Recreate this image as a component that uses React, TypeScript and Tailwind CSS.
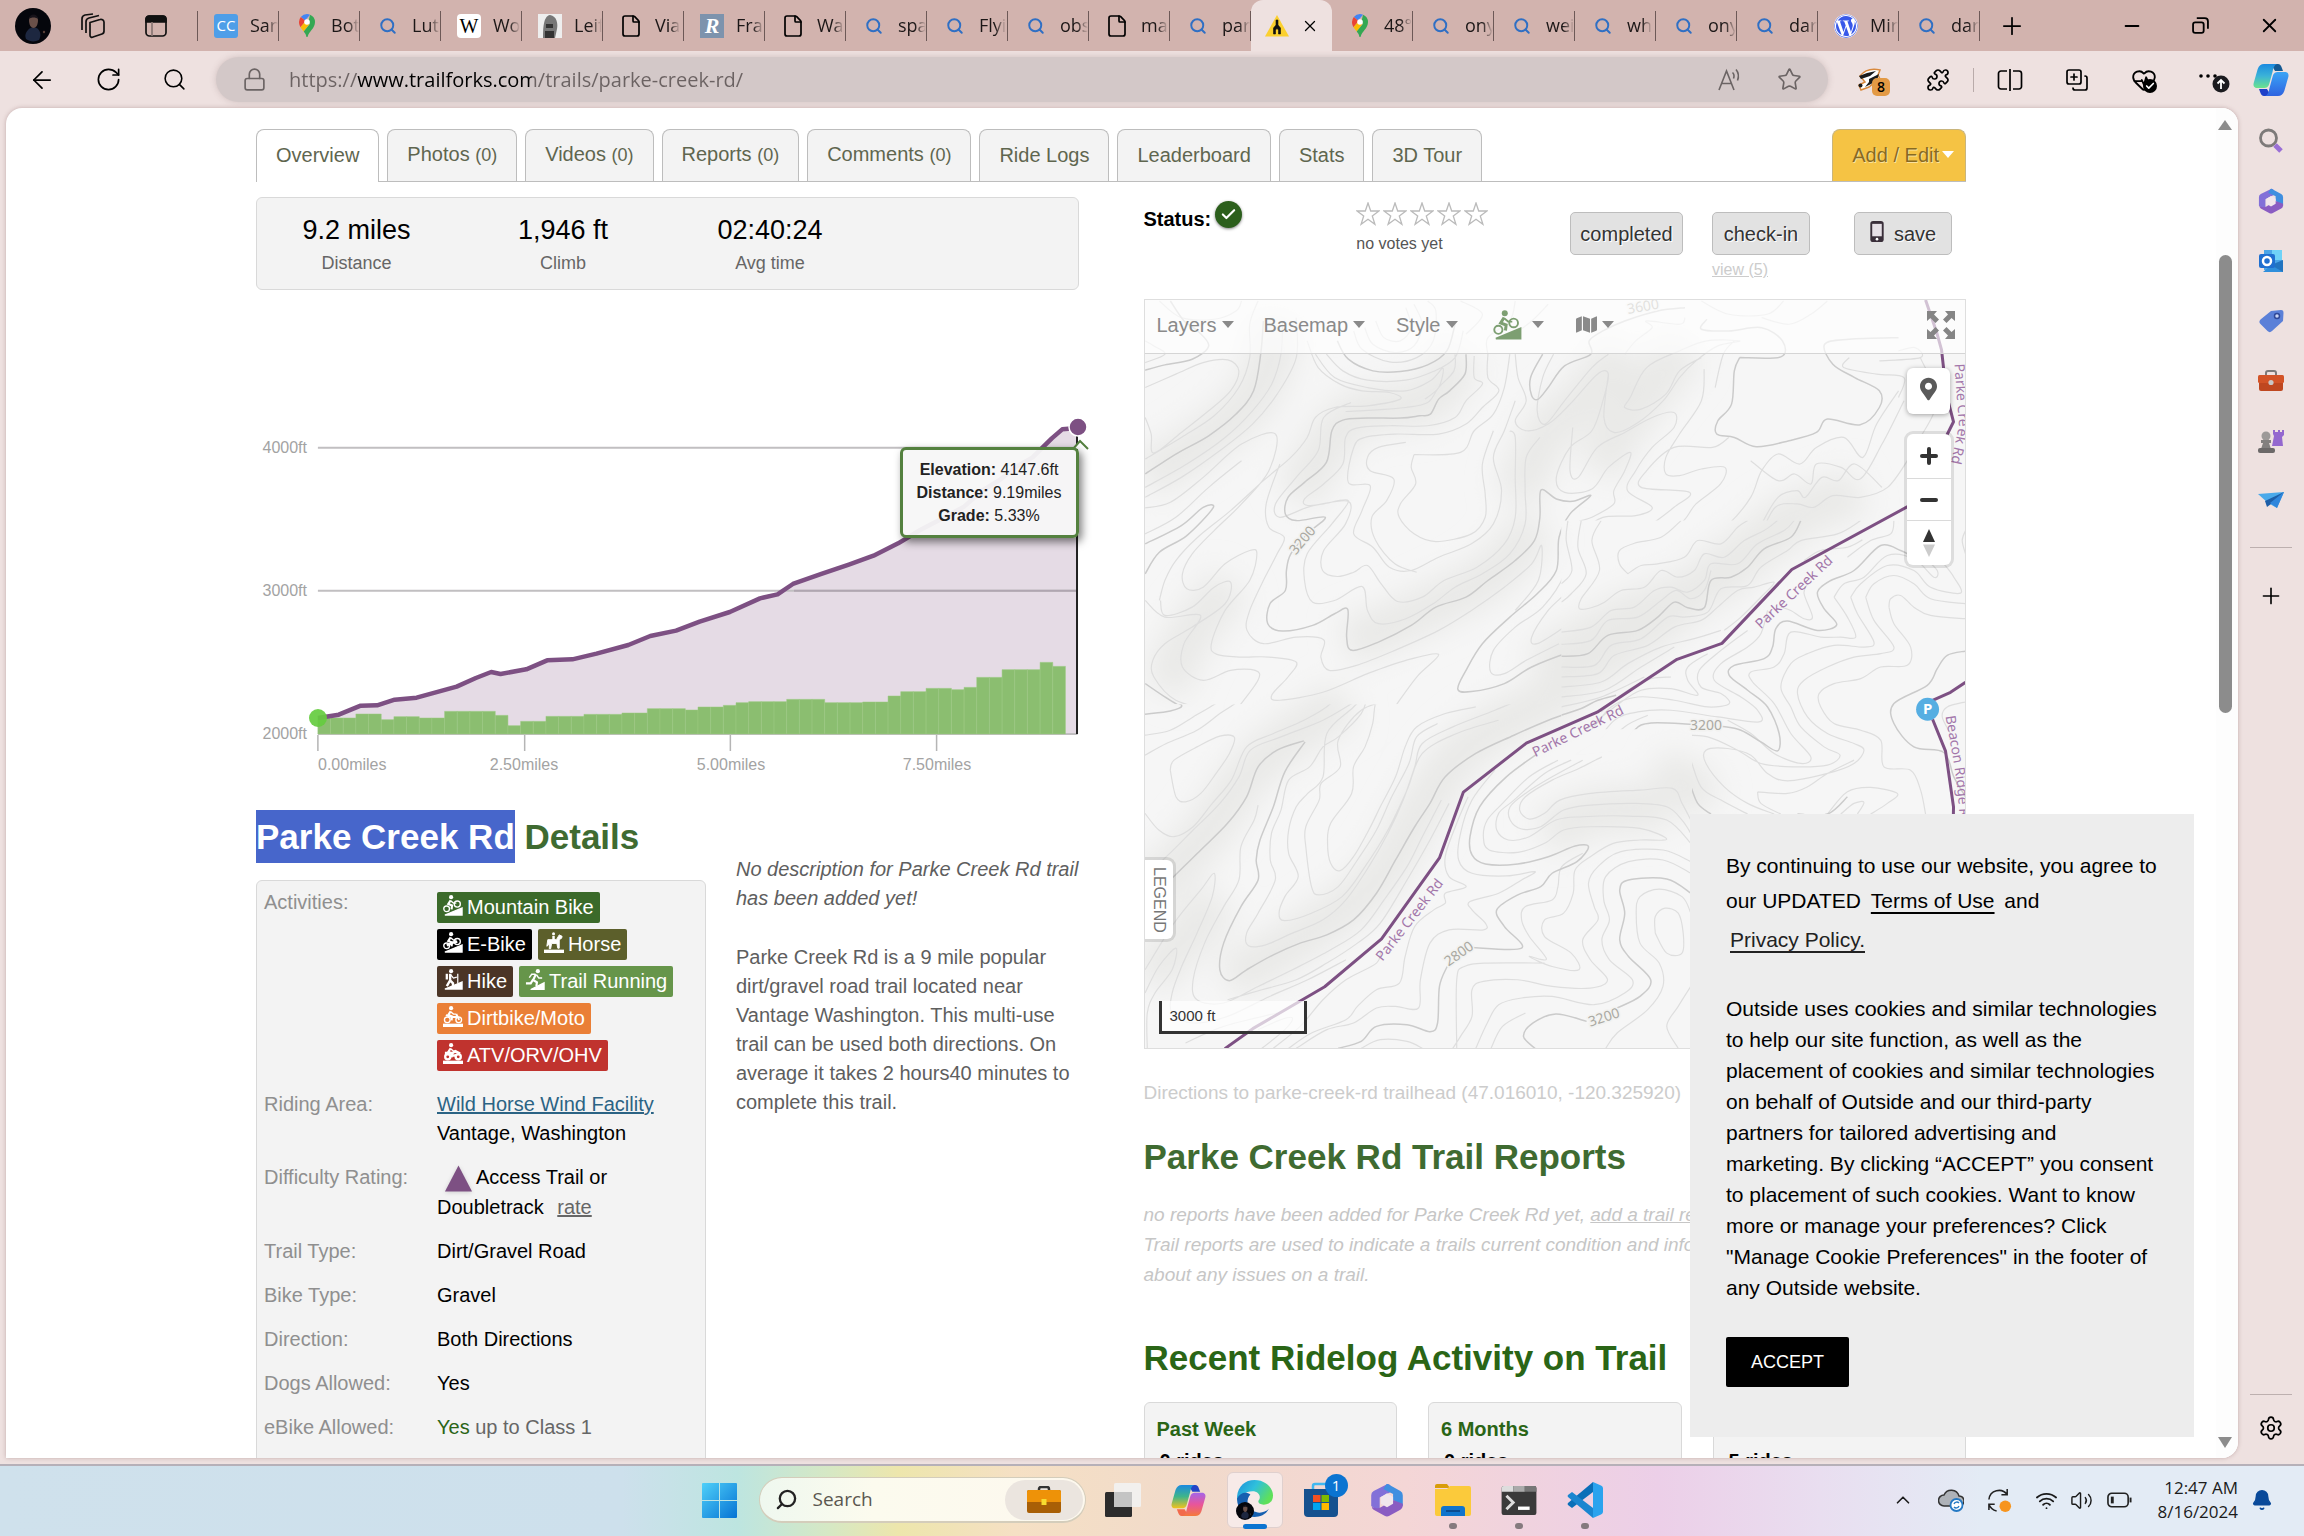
import type { ReactNode } from "react";
import {
  ArrowLeft,
  Bell,
  Check,
  ChevronUp,
  CopyPlus,
  File,
  HeartPulse,
  Lock,
  Minus,
  Plus,
  Puzzle,
  RotateCw,
  Search,
  Settings,
  Star,
  Volume2,
  Wifi,
  X,
} from "lucide-react";
import { FaMapMarkerAlt, FaWordpress, FaMap } from "react-icons/fa";

/* ---------- browser chrome ---------- */

function MapsPin() {
  return (
    <svg viewBox="0 0 16 24" className="h-6 w-4">
      <path d="M8 0a8 8 0 0 0-6.2 3L6 6.5 11 .7A8 8 0 0 0 8 0Z" fill="#4285f4" />
      <path d="M1.8 3A8 8 0 0 0 0 8c0 2 .6 3.700 1.500 5.200L6 7.800V6.500Z" fill="#ea4335" />
      <path d="M1.500 13.200c.8 1.400 2 2.700 3.200 4.200L10.500 10 6 7.800Z" fill="#fbbc04" />
      <path d="M11 .7 9.800 6l1 4-6.100 7.400c1.300 1.600 2.300 3 2.600 5 .2.900 1.200.9 1.400 0C9.700 17.600 16 14.500 16 8a8 8 0 0 0-5-7.300Z" fill="#34a853" />
      <circle cx="8" cy="8" r="2.800" fill="#fff" />
    </svg>
  );
}

const favicons: Record<string, ReactNode> = {
  cc: <span className="flex size-6 items-center justify-center rounded-[3px] bg-[#4e9ee8] text-[15px] text-white">CC</span>,
  pin: <MapsPin />,
  find: <Search className="size-[18px] text-[#2f6fc4]" strokeWidth={2.600} />,
  wiki: <span className="flex size-6 items-center justify-center rounded-[4px] bg-white font-['Liberation_Serif',serif] text-[20px] text-black">W</span>,
  bust: (
    <svg viewBox="0 0 24 24" className="size-6">
      <rect width="24" height="24" fill="#eee" />
      <path d="M5 24c0-8 0-22 7-23 7 1 8 9 7 14l-2 9Z" fill="#777" />
      <path d="M8 10h7v4H8ZM7 17h9v7H7Z" fill="#333" />
    </svg>
  ),
  file: <File className="size-[24px] text-black" strokeWidth={1.700} />,
  r: <span className="flex size-6 items-center justify-center bg-[#7d93ad] font-['Liberation_Serif',serif] text-[22px] font-bold italic text-white">R</span>,
  wp: <FaWordpress className="size-6 rounded-full bg-white text-[#3858e9]" />,
};

const leftTabs: [string, string][] = [
  ["cc", "San"],
  ["pin", "Bot"],
  ["find", "Luth"],
  ["wiki", "Wo"],
  ["bust", "Leif"],
  ["file", "Via"],
  ["r", "Fran"],
  ["file", "Wa"],
  ["find", "spa"],
  ["find", "Flyi"],
  ["find", "obs"],
  ["file", "ma"],
  ["find", "par"],
];
const rightTabs: [string, string][] = [
  ["pin", "48°"],
  ["find", "ony"],
  ["find", "wei"],
  ["find", "wh"],
  ["find", "ony"],
  ["find", "dar"],
  ["wp", "Min"],
  ["find", "dar"],
];

function BrowserTab({ icon, label }: { icon: string; label: string }) {
  return (
    <button className="flex h-[30px] w-[81px] items-center overflow-hidden border-r border-[#6d5957] pl-4 text-[18px] whitespace-nowrap text-[#1c1717]">
      <span className="flex w-6 shrink-0 justify-center">{favicons[icon]}</span>
      <span className="ml-3 overflow-hidden [mask-image:linear-gradient(to_right,black_60%,transparent)]">{label}</span>
    </button>
  );
}

function Avatar({ className }: { className: string }) {
  return (
    <svg viewBox="0 0 36 36" className={className}>
      <circle cx="18" cy="18" r="18" fill="#05060c" />
      <path d="M11 31c-2-5 1-8 3-10 2-2 7-2 9 0 3 3 3 7 1 11-4 2-9 2-13-1Z" fill="#1d2740" />
      <path d="M14 12c0-6 9-6 9 0 0 5-2 8-4.500 8S14 17 14 12Z" fill="#6a5049" />
      <path d="M14 11c0-6 9-6 9 0-2-2-7-2-9 0Z" fill="#17131a" />
      <circle cx="29" cy="24" r="1.200" fill="#5a4038" />
    </svg>
  );
}

function TabStrip() {
  return (
    <div className="flex h-[51px] items-center bg-[#d2b3ae]">
      <button aria-label="Profile" className="ml-[15px]">
        <Avatar className="size-9" />
      </button>
      <button aria-label="Workspaces" className="ml-[29px]">
        <svg viewBox="0 0 26 26" className="size-[26px]" fill="none" stroke="#111" strokeWidth="1.700" strokeLinejoin="round">
          <path d="M10 9.500 20 6.500a3 3 0 0 1 4 2.500v9a3 3 0 0 1-2 3l-9 3a2 2 0 0 1-3-2Z" />
          <path d="M6 20V9a4 4 0 0 1 3-4l10-2.500M2 17V6a4 4 0 0 1 3-4L13 1" />
        </svg>
      </button>
      <button aria-label="Tab actions" className="ml-[39px] mr-[30px]">
        <svg viewBox="0 0 22 22" className="size-[22px]" fill="none" stroke="#111" strokeWidth="1.700">
          <rect x="1" y="1" width="20" height="20" rx="3.500" />
          <path d="M1 4a3 3 0 0 1 3-3h14a3 3 0 0 1 3 3v3H1Z" fill="#111" />
          <path d="M7 7v14" stroke="#8a7774" />
        </svg>
      </button>
      <div className="h-[30px] border-r border-[#6d5957]" />
      {leftTabs.map(([icon, label], i) => (
        <BrowserTab key={i} icon={icon} label={label} />
      ))}
      <div className="relative flex h-[51px] w-[81px] items-center justify-center gap-3 rounded-t-xl bg-[#eee1e0]">
        <svg viewBox="0 0 24 22" className="h-[22px] w-6">
          <path d="M12 0 24 21.500H0Z" fill="#fbd02f" />
          <path d="M11 5h2v5l2.500 3V19h-2v-4L12 13.500 10.500 15v4h-2v-6L11 10Z" fill="#111" stroke="#111" strokeWidth=".6" />
        </svg>
        <button aria-label="Close tab">
          <X className="size-[18px] text-black" strokeWidth={1.700} />
        </button>
      </div>
      {rightTabs.map(([icon, label], i) => (
        <BrowserTab key={i} icon={icon} label={label} />
      ))}
      <button aria-label="New tab" className="ml-[18px]">
        <Plus className="size-7" strokeWidth={1.500} />
      </button>
      <div className="ml-auto flex items-center gap-[49px] pr-[23px]">
        <button aria-label="Minimize">
          <Minus className="size-[22px]" strokeWidth={2} />
        </button>
        <button aria-label="Restore">
          <svg viewBox="0 0 16 16" className="size-[17px]" fill="none" stroke="#000" strokeWidth="1.700">
            <rect x="1" y="5" width="10" height="10" rx="2" />
            <path d="M4.500 1H12a3 3 0 0 1 3 3v7" />
          </svg>
        </button>
        <button aria-label="Close window">
          <X className="size-[23px]" strokeWidth={1.900} />
        </button>
      </div>
    </div>
  );
}

function Copilot({ className, warm = false }: { className: string; warm?: boolean }) {
  const id = warm ? "cpw" : "cpc";
  return (
    <svg viewBox="0 0 36 34" className={className}>
      <defs>
        <linearGradient id={id + "a"} x1="0" y1="0" x2="0" y2="1">
          <stop offset="0" stopColor="#1b8ae0" />
          <stop offset=".5" stopColor={warm ? "#3fb58a" : "#3bb3d8"} />
          <stop offset="1" stopColor={warm ? "#f3c21c" : "#6be38c"} />
        </linearGradient>
        <linearGradient id={id + "b"} x1="0" y1="0" x2="0" y2="1">
          <stop offset="0" stopColor={warm ? "#a565e8" : "#3ba4f5"} />
          <stop offset=".5" stopColor={warm ? "#e8559b" : "#3584ec"} />
          <stop offset="1" stopColor={warm ? "#f5793a" : "#2f63e0"} />
        </linearGradient>
      </defs>
      <path d="M18 1h7c2 0 3 1.500 3.500 3l1.500 4h-8Z" fill={warm ? "#2344c8" : "#155a93"} />
      <path d="M18 33h-7c-2 0-3-1.500-3.500-3L6 26h8Z" fill={warm ? "#f26a4b" : "#1e40c9"} />
      <path d="M11 1h13c-3 1-3.500 4-4.500 8l-3 11c-1 4-2.500 5-6 5H4c-3 0-4-2.500-3.300-5l4-14C6 2.500 8 1 11 1Z" fill={"url(#" + id + "a)"} />
      <path d="M25 33H12c3-1 3.500-4 4.500-8l3-11c1-4 2.500-5 6-5H32c3 0 4 2.500 3.300 5l-4 14C30 31.500 28 33 25 33Z" fill={"url(#" + id + "b)"} />
    </svg>
  );
}

function AddressRow() {
  return (
    <div className="flex h-[57px] items-center bg-[#eee1e0]">
      <button aria-label="Back" className="ml-[28px]">
        <ArrowLeft className="size-[28px]" strokeWidth={1.500} />
      </button>
      <button aria-label="Refresh" className="ml-[39px]">
        <RotateCw className="size-[27px]" strokeWidth={1.500} />
      </button>
      <button aria-label="Search" className="ml-[40px]">
        <Search className="size-[25px]" strokeWidth={1.500} />
      </button>
      <div className="ml-[29px] flex h-[45px] min-w-0 flex-1 items-center rounded-full bg-[#d3c8c8] px-[26px] shadow-[0_0_6px_rgba(120,90,90,0.25)]">
        <Lock className="size-[25px] shrink-0 text-[#6b6464]" strokeWidth={1.600} />
        <input
          aria-label="Address"
          defaultValue="https://www.trailforks.com/trails/parke-creek-rd/"
          className="ml-[22px] min-w-0 flex-1 bg-[linear-gradient(to_right,#6b6262_68px,#000_68px,#000_243px,#6b6262_243px)] bg-clip-text text-[20px] text-transparent outline-none"
        />
        <button aria-label="Read aloud" className="mr-[34px] flex text-[#6b6464]">
          <svg viewBox="0 0 26 24" className="h-6 w-[26px]" fill="none" stroke="currentColor" strokeWidth="1.600">
            <path d="M2 22 9.500 3 17 22M4.500 15.500h10M15.500 4.500c1.500 1.500 1.800 4 1 6M19 1.500c2.500 3 3 7 1.500 11" />
          </svg>
        </button>
        <button aria-label="Add to favorites" className="text-[#6b6464]">
          <Star className="size-[25px]" strokeWidth={1.600} />
        </button>
      </div>
      <button aria-label="Privacy extension" className="relative ml-[29px]">
        <svg viewBox="0 0 28 26" className="h-[26px] w-7">
          <path d="M3 9C7 4 14 1 23 3l-2 5 3 6-6 1-6 5-8 3-2-5 6-3Z" fill="#fff" stroke="#d9893c" strokeWidth="1.500" />
          <path d="m2 9 8-3 9-2-6 5-9 3Zm10 3 10-5-2 6-6 4-6 3 4-5Z" fill="#1b1b1b" />
          <circle cx="3.500" cy="18.500" r="2" fill="#1b1b1b" />
        </svg>
        <span className="absolute top-[11px] left-[15px] flex h-[18px] w-[18px] items-center justify-center rounded-[5px] bg-[#e39a45] text-[14px] font-semibold text-black">8</span>
      </button>
      <button aria-label="Extensions" className="ml-[41px]">
        <Puzzle className="size-6" strokeWidth={1.700} />
      </button>
      <div className="mx-[23px] h-6 border-l border-[#b9abaa]" />
      <button aria-label="Split screen">
        <svg viewBox="0 0 26 24" className="h-6 w-[26px]" fill="none" stroke="#000" strokeWidth="1.700">
          <path d="M10 3H4a2.500 2.500 0 0 0-2.500 2.500v13A2.500 2.500 0 0 0 4 21h6M16 3h6a2.500 2.500 0 0 1 2.500 2.500v13A2.500 2.500 0 0 1 22 21h-6M13 1v22" />
        </svg>
      </button>
      <button aria-label="Collections" className="ml-[42px]">
        <CopyPlus className="size-6 -scale-x-100 rotate-90" strokeWidth={1.700} />
      </button>
      <button aria-label="Browser essentials" className="relative ml-[42px]">
        <HeartPulse className="size-[26px]" strokeWidth={1.700} />
        <span className="absolute right-0 bottom-0 flex size-[14px] items-center justify-center rounded-full bg-black text-white">
          <Check className="size-[10px]" strokeWidth={4} />
        </span>
      </button>
      <button aria-label="Settings and more" className="relative ml-[42px] pb-1">
        <svg viewBox="0 0 32 30" className="h-[30px] w-8">
          <circle cx="2" cy="13" r="1.800" />
          <circle cx="9" cy="13" r="1.800" />
          <circle cx="16" cy="13" r="1.800" />
          <circle cx="22" cy="21" r="8.500" fill="#1b1b1f" />
          <path d="M22 26v-9m-3.500 3.500L22 17l3.500 3.500" stroke="#fff" strokeWidth="1.800" fill="none" />
        </svg>
      </button>
      <button aria-label="Copilot" className="mr-[15px] ml-[22px]">
        <Copilot className="h-[34px] w-9" />
      </button>
    </div>
  );
}

function Hexagon365({ className }: { className: string }) {
  return (
    <svg viewBox="0 0 28 28" className={className}>
      <path d="M14 1 3 6.500A4 4 0 0 0 1 10v9l7 5V12l10-5-1-4.500C16.500 1.500 15 .5 14 1Z" fill="#8270d8" />
      <path d="m15 1 10 5.500A4 4 0 0 1 27 10v9l-8-5V9l-8-4 2.500-4a2 2 0 0 1 1.500 0Z" fill="#3f8fe0" />
      <path d="M27 17v2a4 4 0 0 1-2 3l-9 5a4 4 0 0 1-4 0l-9-5a3 3 0 0 1-1.500-2.500C4 21 7 21 9 20l10-6Z" fill="#8a5cc2" />
      <path d="M14 8.500 19 11.500v5.500L14 20l-5-3V11.500Z" fill="#f1e6ec" />
    </svg>
  );
}

function Sidebar() {
  return (
    <aside className="flex w-[66px] flex-col items-center pt-[20px]">
      <button aria-label="Search" className="mb-[34px]">
        <svg viewBox="0 0 26 26" className="size-[26px]" fill="none">
          <circle cx="10.500" cy="10" r="8" stroke="#7d7a79" strokeWidth="2.800" />
          <path d="m17 17 6 6" stroke="#9a6fd6" strokeWidth="5" />
        </svg>
      </button>
      <button aria-label="Microsoft 365" className="mb-[34px]">
        <Hexagon365 className="size-[26px]" />
      </button>
      <button aria-label="Outlook" className="mb-[34px]">
        <svg viewBox="0 0 26 26" className="size-[26px]">
          <path d="M6 2h18v20H6Z" fill="#4aa5e8" />
          <path d="M14 2h10v10H14Z" fill="#6fd2f7" />
          <path d="m12 18 13-6v12H5Z" fill="#2f8fdc" />
          <path d="m13 17 12 7V12Z" fill="#1b62ad" opacity=".6" />
          <rect x="1" y="6" width="16" height="14" rx="2" fill="#1f6fd0" />
          <circle cx="9" cy="13" r="4" fill="none" stroke="#fff" strokeWidth="2.500" />
        </svg>
      </button>
      <button aria-label="Shopping" className="mb-[34px]">
        <svg viewBox="0 0 26 26" className="size-[26px]">
          <path d="m13 3 10-1c2 0 2.500 1 2.500 3l-.5 8-11 10c-1.500 1.500-3 1.500-4.500 0l-7-7c-1.500-1.500-1.500-3 0-4.500Z" fill="#5b80d8" />
          <circle cx="19" cy="8" r="2.500" fill="#c9d5f5" stroke="#2f4899" strokeWidth="1.500" />
        </svg>
      </button>
      <button aria-label="Tools" className="mb-[34px]">
        <svg viewBox="0 0 28 26" className="h-[26px] w-7">
          <path d="M9 8V5a2 2 0 0 1 2-2h6a2 2 0 0 1 2 2v3" fill="none" stroke="#7d7a79" strokeWidth="2" />
          <rect x="1" y="7" width="26" height="8" rx="1.500" fill="#d35327" />
          <path d="M2 15h24v6a2 2 0 0 1-2 2H4a2 2 0 0 1-2-2Z" fill="#bf4720" />
          <circle cx="14" cy="14.500" r="2.600" fill="#c9c6c6" />
        </svg>
      </button>
      <button aria-label="Games" className="mb-[34px]">
        <svg viewBox="0 0 28 26" className="h-[26px] w-7">
          <path d="M16 2h2v2h3V2h2v2h2V2h2v5l-2 2 1 9H15l2-10-1-2Z" fill="#9468cf" />
          <circle cx="9" cy="8" r="4.500" fill="#9c9998" />
          <path d="M4 12h10v3H4ZM6 15h6l2 6H4Z" fill="#83807f" />
          <rect x="1" y="20" width="17" height="5" rx="2" fill="#6c6969" />
        </svg>
      </button>
      <button aria-label="Drop" className="mb-[33px]">
        <svg viewBox="0 0 26 26" className="size-[26px]">
          <path d="M0 6 26 4 19 20l-9-5Z" fill="#4aa9ea" />
          <path d="M26 4 7 13l2 6 4-3Z" fill="#1c5ea8" />
          <path d="M26 4 12 15l7 5Z" fill="#2f86dc" />
        </svg>
      </button>
      <div className="mb-[35px] w-[42px] border-t border-[#bdb0af]" />
      <button aria-label="Customize">
        <Plus className="size-[26px]" strokeWidth={1.500} />
      </button>
      <div className="mt-auto mb-[20px] w-[42px] border-t border-[#bdb0af]" />
      <button aria-label="Settings" className="mb-[17px]">
        <Settings className="size-[26px]" strokeWidth={1.600} />
      </button>
    </aside>
  );
}

/* ---------- trail page ---------- */

const pageTabs: [string, string?][] = [
  ["Photos", "(0)"],
  ["Videos", "(0)"],
  ["Reports", "(0)"],
  ["Comments", "(0)"],
  ["Ride Logs"],
  ["Leaderboard"],
  ["Stats"],
  ["3D Tour"],
];

function PageTabs() {
  return (
    <nav className="flex border-b border-[#bdbdbd] text-[20px] leading-[30px] text-[#5f664f] [text-shadow:1px_1px_0_#fff]">
      <button className="-mb-px rounded-t-lg border border-b-0 border-[#bdbdbd] bg-white px-[19px] pt-[9px] pb-[12px]">Overview</button>
      {pageTabs.map(([name, count]) => (
        <button key={name} className="ml-[8px] rounded-t-lg border border-b-0 border-[#bdbdbd] bg-[#f3f3f3] px-[19px] pt-[9px] pb-[11px]">
          {name} {count && <span className="text-[18px]">{count}</span>}
        </button>
      ))}
      <button className="ml-auto flex items-center gap-[3px] rounded-t-lg border border-b-0 border-[#c9b57c] bg-[#f5c344] pt-[9px] pr-[11px] pb-[11px] pl-[19px] text-[#876a22] [text-shadow:1px_1px_0_#fbe29d]">
        Add / Edit
        <svg viewBox="0 0 12 7" className="h-[7px] w-3">
          <path d="M0 0h12L6 7Z" fill="#fff" />
        </svg>
      </button>
    </nav>
  );
}

const stats: [string, string][] = [
  ["9.2 miles", "Distance"],
  ["1,946 ft", "Climb"],
  ["02:40:24", "Avg time"],
];

function Summary() {
  return (
    <div className="mt-[15px] grid h-[93px] grid-cols-[199px_214px_200px] rounded-md border border-[#d9d9d9] bg-[#f3f3f3] pt-[15px] text-center">
      {stats.map(([value, label]) => (
        <div key={label}>
          <div className="text-[27px] leading-[34px] text-black">{value}</div>
          <div className="mt-1 text-[18px] leading-6 text-[#666]">{label}</div>
        </div>
      ))}
    </div>
  );
}

/* Grade bars: [top, number of bars that share it], in chart units. */
const grades: [number, number][] = [
  [1044, 3], [1032, 2], [1049, 1], [1040, 2], [1044, 2], [1024, 4], [1036, 1], [1067, 1], [1054, 2], [1039, 3],
  [1033, 3], [1029, 2], [1016, 3], [1020, 1], [1011, 2], [1006, 1], [998, 1], [995, 3], [988, 3], [998, 3],
  [996, 2], [978, 1], [965, 2], [955, 2], [959, 1], [952, 1], [922, 2], [899, 3], [877, 1], [889, 1],
];
const bars = grades.flatMap(([top, n]) => Array.from({ length: n }, () => top));

const profile =
  "142,1044 180,1034 220,1007 250,1006 282,989 322,983 395,950 430,924 458,906 475,912 522,898 560,871 606,868 650,851 708,825 748,798 795,782 838,755 893,726 948,685 980,673 1008,642 1060,612 1110,584 1155,557 1200,520 1240,480 1275,450 1320,410 1355,360 1385,330 1415,290 1445,262 1480,205 1499,178 1527,174";

function ElevationChart() {
  return (
    <div className="relative mt-[90px]">
      <svg viewBox="0 0 844 410" className="-mr-[22px] block w-[844px] max-w-none font-['Liberation_Sans',Arial,sans-serif]">
        <g transform="translate(-16 -10) scale(.5485 .33333)">
          <polygon points={profile + " 1527,1092 142,1092"} fill="#e5dbe5" />
          <g stroke="#c1bfc1" strokeWidth="2">
            <path d="M142 233H1527M142 662H1527M142 1092H1527" vectorEffect="non-scaling-stroke" />
          </g>
          <path d="M1010 662H1527" stroke="#b0a6b1" strokeWidth="2" vectorEffect="non-scaling-stroke" />
          {bars.map((top, i) => (
            <rect key={i} x={142 + i * 23.100} y={top} width="23.100" height={1092 - top} fill="#8bbe70" stroke="#9cca82" strokeWidth=".5" vectorEffect="non-scaling-stroke" />
          ))}
          <polyline points={profile} fill="none" stroke="#7d5083" strokeWidth="4.500" strokeLinejoin="round" vectorEffect="non-scaling-stroke" />
          <path d="M142 1095v48M519 1095v48M894 1095v48M1270 1095v48" stroke="#b5b5b5" strokeWidth="1.500" vectorEffect="non-scaling-stroke" />
          <path d="M1526 174V1092" stroke="#222" strokeWidth="2" vectorEffect="non-scaling-stroke" />
        </g>
        <circle cx="62" cy="338" r="9" fill="#65cc3f" opacity=".92" />
        <circle cx="822" cy="47" r="9" fill="#7d5083" stroke="#fff" strokeWidth="1.500" />
        <path d="m817 69 7-8 8 8" fill="#fff" stroke="#54813f" strokeWidth="2" />
        <g fill="#a3a3a3" fontSize="16">
          <text x="51" y="73" textAnchor="end">4000ft</text>
          <text x="51" y="216" textAnchor="end">3000ft</text>
          <text x="51" y="359" textAnchor="end">2000ft</text>
          <text x="62" y="390">0.00miles</text>
          <text x="268" y="390" textAnchor="middle">2.50miles</text>
          <text x="475" y="390" textAnchor="middle">5.00miles</text>
          <text x="681" y="390" textAnchor="middle">7.50miles</text>
        </g>
      </svg>
      <div className="absolute top-[67px] right-0 w-[179px] rounded-md border-[3px] border-[#54813f] bg-[#f7f7f7]/95 py-[8px] text-center text-[16px] leading-[23px] text-[#222] shadow-[3px_4px_8px_rgba(0,0,0,0.5)]">
        <div><b>Elevation:</b> 4147.6ft</div>
        <div><b>Distance:</b> 9.19miles</div>
        <div><b>Grade:</b> 5.33%</div>
      </div>
    </div>
  );
}

const slope = <path d="M2 21 20 13.500V21Z" fill="currentColor" />;
const rider = (
  <>
    <circle cx="8.500" cy="2.300" r="2.200" fill="currentColor" stroke="none" />
    <path d="M8 5.500 5.500 9.500l4 1.500-.5 4" strokeWidth="2.200" />
    <path d="m8 6 3 2.500h3" strokeWidth="1.400" />
  </>
);
const level = <path d="M0 18.500h21V22H0Z" fill="currentColor" stroke="none" />;

const activityIcons: Record<string, ReactNode> = {
  bike: (
    <>
      {slope}
      {rider}
      <circle cx="3.800" cy="14.500" r="3" />
      <circle cx="15" cy="9.500" r="3.200" />
    </>
  ),
  ebike: (
    <>
      {slope}
      {rider}
      <circle cx="3.800" cy="14.500" r="3" />
      <circle cx="15" cy="10" r="3.200" />
      <path d="m4 14 7-3 4-1" strokeWidth="2.500" />
    </>
  ),
  horse: (
    <>
      {level}
      <path d="M4 8h9l3-5 3 1.500-.5 2L16 8v9h-1.500l-1-5H8l-1 5.500H5.500l.3-5L3 15Z" fill="currentColor" stroke="currentColor" strokeWidth="1" />
      <circle cx="10" cy="1.800" r="1.600" fill="currentColor" stroke="none" />
      <path d="M10 4v5" strokeWidth="2.600" />
    </>
  ),
  hike: (
    <>
      {slope}
      <circle cx="8.500" cy="2.300" r="2.200" fill="currentColor" stroke="none" />
      <path d="M7.500 5v7l3 3v3M7.500 12 4 18" strokeWidth="2.500" />
      <path d="M4 5v6" strokeWidth="2.400" />
      <path d="m8 6 3 3.500 3.500-1M15.500 5v10" strokeWidth="1.300" />
    </>
  ),
  run: (
    <>
      <path d="M6 21.500 20 14.500v7Z" fill="currentColor" />
      <circle cx="13.500" cy="2.300" r="2.200" fill="currentColor" stroke="none" />
      <path d="m11.500 5.500-3 6 4 2.500-.5 4M8.500 11 6 15H1" strokeWidth="2.300" />
      <path d="M11 5.500H7L4.500 9M12 6l2.500 3.500H18" strokeWidth="1.500" />
    </>
  ),
  moto: (
    <>
      {level}
      {rider}
      <circle cx="4.500" cy="14.500" r="3" />
      <circle cx="16.500" cy="14.500" r="3" />
      <path d="m3 9.500 6 2h6l-1-3 3 6" strokeWidth="2" />
    </>
  ),
  atv: (
    <>
      {level}
      {rider}
      <circle cx="5" cy="14.500" r="2.700" strokeWidth="2.400" />
      <circle cx="16" cy="14.500" r="2.700" strokeWidth="2.400" />
      <path d="M2 10.500h8l3-2 5 2.500M8 13h6" strokeWidth="2.600" />
    </>
  ),
};

function ActivityIcon({ kind, className }: { kind: string; className: string }) {
  return (
    <svg viewBox="0 0 21 22" className={className} fill="none" stroke="currentColor" strokeWidth="1.400">
      {activityIcons[kind]}
    </svg>
  );
}

const activities: [string, string, string][] = [
  ["bike", "Mountain Bike", "bg-[#3b6a2a]"],
  ["ebike", "E-Bike", "bg-black"],
  ["horse", "Horse", "bg-[#5c5f2b]"],
  ["hike", "Hike", "bg-[#4b3526]"],
  ["run", "Trail Running", "bg-[#66954a]"],
  ["moto", "Dirtbike/Moto", "bg-[#ea7f36]"],
  ["atv", "ATV/ORV/OHV", "bg-[#c0332e]"],
];

const plainRows: [string, ReactNode][] = [
  ["Trail Type:", "Dirt/Gravel Road"],
  ["Bike Type:", "Gravel"],
  ["Direction:", "Both Directions"],
  ["Dogs Allowed:", "Yes"],
  [
    "eBike Allowed:",
    <>
      <span className="text-[#2a6516]">Yes</span> <span className="text-[#666]">up to Class 1</span>
    </>,
  ],
];

function DetailRow({ label, children }: { label: string; children: ReactNode }) {
  return (
    <tr className="align-top">
      <th scope="row" className="w-[173px] pb-[15px] text-left font-normal whitespace-nowrap text-[#8f8f8f]">{label}</th>
      <td className="pb-[15px] text-black">{children}</td>
    </tr>
  );
}

function Details() {
  return (
    <section className="mt-[20px] flex">
      <div className="w-[450px] shrink-0">
        <h2 className="w-max text-[35px] leading-[53px] font-bold text-[#3f6b31]">
          <span className="inline-block bg-[#4766cb] text-white">Parke Creek Rd</span> Details
        </h2>
        <div className="mt-[17px] rounded-md border border-[#d9d9d9] bg-[#f3f3f3] px-[7px] pt-[7px] pb-6">
          <table className="w-full text-[20px] leading-[29px]">
            <tbody>
              <DetailRow label="Activities:">
                <div className="flex flex-wrap gap-x-[6px] gap-y-[6px] pt-[4px] pb-[4px]">
                  {activities.map(([kind, name, color]) => (
                    <span key={kind} className={"flex h-[31px] items-center gap-[4px] rounded-[2px] px-[6px] text-white " + color}>
                      <ActivityIcon kind={kind} className="mb-1 h-[21px] w-[20px]" />
                      {name}
                    </span>
                  ))}
                </div>
              </DetailRow>
              <DetailRow label="Riding Area:">
                <a href="#area" className="text-[#2b6384] underline">Wild Horse Wind Facility</a>
                <br />
                Vantage, Washington
              </DetailRow>
              <DetailRow label="Difficulty Rating:">
                <svg viewBox="0 0 30 28" className="mr-[3px] ml-[7px] inline-block h-7 w-[29px] drop-shadow-sm">
                  <path d="M15 0 29 27H1Z" fill="#7d5083" />
                </svg>
                Access Trail or
                <br />
                Doubletrack <a href="#rate" className="ml-[8px] text-[#666] underline">rate</a>
              </DetailRow>
              {plainRows.map(([label, value]) => (
                <DetailRow key={label} label={label}>{value}</DetailRow>
              ))}
            </tbody>
          </table>
        </div>
      </div>
      <div className="mt-[45px] -mr-4 ml-[30px] text-[20px] leading-[29px] text-[#5e5e5e]">
        <p className="italic">
          No description for Parke Creek Rd trail
          <br />
          has been added yet!
        </p>
        <p className="mt-[30px]">
          Parke Creek Rd is a 9 mile popular
          <br />
          dirt/gravel road trail located near
          <br />
          Vantage Washington. This multi-use
          <br />
          trail can be used both directions. On
          <br />
          average it takes 2 hours40 minutes to
          <br />
          complete this trail.
        </p>
      </div>
    </section>
  );
}

/* ---------- map ---------- */

type Sheet = "north" | "south" | "east";

/* Each survey sheet has its own grid: scale x, scale y, offset x, offset y. */
const sheets: Record<Sheet, [number, number, number, number]> = {
  north: [0.5485, 0.33333, -13, -9],
  south: [0.38265, 0.33333, -13, 381],
  east: [0.33333, 0.33333, 417, 221],
};

function curve(sheet: Sheet, source: string) {
  const [sx, sy, ox, oy] = sheets[sheet];
  const p = source.split(" ").map((pair) => {
    const [x, y] = pair.split(",").map(Number);
    return [x * sx + ox, y * sy + oy];
  });
  let d = "M" + p[0][0].toFixed(1) + " " + p[0][1].toFixed(1);
  for (let i = 0; i < p.length - 1; i++) {
    const a = p[Math.max(i - 1, 0)];
    const b = p[i];
    const c = p[i + 1];
    const e = p[Math.min(i + 2, p.length - 1)];
    const nums = [b[0] + (c[0] - a[0]) / 6, b[1] + (c[1] - a[1]) / 6, c[0] - (e[0] - b[0]) / 6, c[1] - (e[1] - b[1]) / 6, c[0], c[1]];
    d += "C" + nums.map((n) => n.toFixed(1)).join(" ");
  }
  return d;
}

const majorContours: [Sheet, string][] = [
  ["north", "24,238 60,222 110,205 140,165 120,120 95,90 70,30"],
  ["north", "24,550 80,490 140,435 190,370 222,300 235,190 240,90"],
  ["north", "24,850 50,785 100,735 148,652 130,650 90,705 24,760"],
  ["north", "610,190 608,250 580,300 560,325 545,370 525,375 490,382 430,382 385,388 365,420 355,515 315,575 285,620 280,670 300,690 353,680 320,730 290,790 282,840 280,900 252,940 248,1000 275,1022 330,1005 370,970 394,957 392,1040 402,1080 450,1055 510,1005 555,950 610,920 650,870 700,810 735,750 745,680 747,598 775,625 805,632 838,615 800,670 780,740 775,840 740,910 690,980 640,1060 610,1140 595,1197 620,1204 680,1180 730,1130 800,1085 860,1055"],
  ["north", "375,150 395,205 440,240 490,242 540,222 575,180 590,100"],
  ["north", "750,190 728,260 730,315 742,325 760,290 790,225 838,190 835,150 860,120 900,90 960,60 1010,50"],
  ["north", "1110,200 1100,240 1095,340 1070,390 1068,430 1100,440 1140,468 1200,450 1250,425 1270,385 1330,402 1365,350 1365,300 1320,260 1280,220 1265,160 1310,145 1400,140"],
  ["north", "1110,200 1185,198 1188,150 1150,110 1090,120 1040,115 1050,85"],
  ["north", "24,1180 60,1220 90,1250"],
  ["south", "34,10 80,50 130,75 100,92 34,102"],
  ["south", "453,185 400,275 370,380 335,480 325,540 330,600 285,680 240,790 230,870 255,903 300,870 370,825 440,790 510,765 580,720 640,640 690,540 740,440 780,370 820,290 900,220 1000,165 1090,120 1150,95"],
  ["south", "34,680 100,600 180,510 250,430 300,350 330,260 380,210 450,182"],
  ["south", "1060,222 980,290 910,380 885,470 890,525 925,552 1010,552 1090,530 1160,498 1195,500 1165,545 1100,580 1070,620 1010,645 955,690 975,740 1020,805 890,803"],
  ["south", "825,860 805,920 800,1030 780,1056 720,1035 640,1040 600,1085 540,1106"],
  ["south", "1463,640 1400,597 1300,600 1277,630 1290,700 1277,780 1300,830 1358,900 1330,950 1270,985"],
  ["south", "1190,1025 1110,1003 1050,1030 1025,1070 1055,1106"],
  ["east", "390,612 270,608 220,630 180,700 125,760 200,762 280,768 340,747 380,780 410,850 450,882"],
  ["east", "480,618 540,630 600,665 650,692 655,640 620,560 560,510 505,465 520,435 610,415 635,380 645,325 680,302 770,330 828,313 790,265 770,215 810,180 880,150 960,75 1020,90 1040,100"],
  ["east", "0,408 80,400 140,345 230,330 290,290 340,245 380,262 430,262 450,180 510,170 560,140 610,85 690,50 720,0"],
  ["east", "0,585 60,565 110,540 165,525"],
  ["east", "1215,392 1160,405 1130,445 1100,495 1000,550 1000,610 1060,680 1150,697 1180,770 1215,830"],
  ["east", "710,882 800,882 860,830"],
];

const minorContours: [Sheet, string][] = [
  ["north", "24,290 80,250 130,215 175,207 195,240 180,300 140,360 90,425 40,487 35,430 24,380"],
  ["north", "24,215 60,190 40,165 24,150"],
  ["north", "50,30 90,80 150,85 190,60 200,30"],
  ["north", "24,505 90,440 150,375 195,290 215,200 215,100 230,30"],
  ["north", "24,590 100,520 170,440 220,360 255,280 272,190 275,90"],
  ["north", "24,620 90,560 160,480 220,400 265,310 300,200 300,80"],
  ["north", "24,652 70,635 130,560 200,460 262,430 250,540 200,640 150,720 110,790 92,850 100,895 130,890 170,820 215,780 228,790 215,870 170,960 145,1060 155,1092 200,1100 250,1100 300,1115 285,1160 255,1215 270,1230 350,1205 430,1150 500,1110 560,1092 520,1160 480,1250"],
  ["north", "24,730 80,680 140,590 200,510"],
  ["north", "50,930 60,870 80,810 120,740 180,660 240,570 290,500 320,440 335,380 370,350 430,345 490,325 470,305 420,300 380,280 340,230 320,150"],
  ["north", "270,520 245,640 250,710 278,740 265,790 240,870 215,960 210,1020 240,1060 300,1040 350,1048 345,1100 360,1140 410,1125 480,1080 560,1020 620,960 680,890 730,820 748,765 742,870 700,960"],
  ["north", "400,335 350,380 340,480 300,560 262,640 270,680 320,650 350,640 395,630 365,700 320,790 315,870 330,935 370,930 420,888 430,960 450,1000 500,985 550,940 590,890 640,850 690,790 718,700 718,600 720,500 745,440"],
  ["north", "590,190 588,240 560,290 540,335 500,350 440,358 390,362"],
  ["north", "625,195 625,260 640,280 610,330 590,380 540,405 470,405 410,412 390,440 385,520 350,580 315,625 325,645 395,632 390,700 350,780 348,840 375,858 405,845 430,825 455,880 485,933 530,920 570,870 630,830 680,760 700,680 700,560 700,440 690,420"],
  ["north", "650,190 650,260 670,300 640,350 610,400 560,430 480,430 425,440 405,470 395,575 435,585 420,660 405,730 440,770 470,830 510,840 560,800 620,760 660,700 675,600 660,500 680,420 700,330"],
  ["north", "500,455 450,470 430,500 435,540 478,565 465,630 438,680 445,750 480,820 520,845"],
  ["north", "515,492 600,485 625,420 660,370 680,290 690,190"],
  ["north", "515,492 510,530 518,580 490,640 488,680 515,730 555,753 620,730 645,680 645,610 640,520 660,420"],
  ["north", "355,190 385,240 430,268 500,268 550,242 590,200 605,120"],
  ["north", "335,190 370,260 430,290 500,300 545,270 568,232 560,290 535,325"],
  ["north", "405,120 420,175 470,213 520,200 550,150 555,60 540,30"],
  ["north", "425,110 440,160 480,185 515,165 530,100 515,40"],
  ["north", "445,90 460,140 490,150 510,110 500,50"],
  ["north", "700,190 705,260 720,330 700,390 720,420 760,400 800,340 850,250 870,250 860,330 840,420 800,470 775,560 790,605 840,595 870,530 910,485 900,540 880,600 880,640 840,680 810,700 795,760 790,850 750,950 700,1010 660,1080 655,1145 680,1150 720,1110 780,1060"],
  ["north", "770,190 750,260 740,360 755,400 790,330 840,230 870,190"],
  ["north", "805,410 800,540 815,560 850,470 900,425 950,380 990,365 990,410 950,470 920,540 905,600 950,650 920,675 860,680 830,720 812,800 800,890 760,960 730,1040 740,1060 790,1010"],
  ["north", "870,250 862,380 880,425 920,400 970,330 1000,260 1030,210 1070,165 1110,150 1050,150 1000,180 940,230 910,320 900,350 930,355 975,310 1000,240 1040,200"],
  ["north", "900,190 920,150 950,110 940,90 1000,100 1010,80"],
  ["north", "1045,235 1040,330 1000,430 975,500 975,550 1000,555 1040,535 1083,530 1075,580 1030,640 1000,700 940,715 880,720"],
  ["north", "1090,440 1060,470 990,470 940,540 930,590 1018,605 990,650 950,700 910,745 888,790"],
  ["north", "990,775 1040,760 1090,700 1130,620 1150,540 1180,490 1220,520 1250,470 1300,440 1335,500 1360,400 1400,300"],
  ["north", "1130,510 1180,570 1210,550 1240,580 1250,520 1295,530 1330,565 1370,460 1410,330"],
  ["north", "1080,790 1130,765 1150,700 1180,620 1215,600 1230,620 1260,560 1290,570 1320,520 1370,590"],
  ["north", "1120,790 1145,740 1175,650 1215,640 1245,650 1280,615 1330,620 1380,590 1420,500"],
  ["north", "1065,290 1080,190 1100,150"],
  ["north", "1310,200 1300,230 1360,250 1410,260 1400,320"],
  ["north", "1365,210 1440,200 1430,170 1400,180"],
  ["north", "1150,80 1200,100 1240,70 1270,30"],
  ["north", "1040,30 1090,70 1160,70 1190,30"],
  ["north", "1440,200 1470,330 1440,440"],
  ["north", "600,30 640,70 610,130"],
  ["north", "700,30 690,90 650,140 650,190"],
  ["north", "760,40 730,90 690,140"],
  ["north", "24,930 60,980 125,975 95,1060 92,1130 130,1170 180,1140 225,1140 230,1170 190,1260"],
  ["north", "52,930 60,975 110,950 150,890 180,875 170,940 110,1010 60,1060 38,1110 40,1160 80,1230 150,1260"],
  ["south", "100,270 110,240 170,200 230,168 268,172 255,220 220,280 180,340 140,365 115,350 100,270"],
  ["south", "34,165 100,150 160,110 230,60 215,40 150,20 60,0"],
  ["south", "34,225 90,190 170,150 230,100 280,60 320,0"],
  ["south", "34,400 70,450 110,470 160,440 210,370 260,300 300,200 370,160 450,120 520,70 560,0"],
  ["south", "370,0 365,50 400,60 480,40 560,0"],
  ["south", "34,590 90,530 160,450 230,370 280,290 310,210 390,170 500,120 590,60 612,50 600,100 540,170 500,200 465,260 410,300 390,390 365,460 362,540 375,600 330,700 300,760 305,798 350,795 420,760 500,720 560,660 620,560 670,460 710,360 740,260 760,190 840,140 950,90 1050,40 1100,0"],
  ["south", "680,0 640,60 630,130 610,200 580,260 575,340 520,430 512,490 520,550 545,572 580,530 620,450 650,380 690,290 715,200 745,140 820,100 900,80"],
  ["south", "740,0 690,50 600,90 540,180 545,260 495,310 490,360 455,440 455,500 470,620 490,645 540,620 590,540 640,450 680,350 725,250 745,170 800,130"],
  ["south", "650,0 580,80 510,160 500,290 460,340 430,380 410,450 410,520 435,590 400,650 385,700 400,722 470,700 550,650 610,560 670,450 720,330 760,220 850,160 960,120"],
  ["south", "330,375 320,420 285,500 280,600 240,680 190,790 160,900 170,960 240,970 330,920 420,870 520,810 600,750 660,660 720,560 760,470 810,360"],
  ["south", "34,870 110,730 180,630 215,580 210,650 170,760 130,860 105,940 105,1000 160,1030 250,1010 360,950 460,900 560,840"],
  ["south", "34,940 70,860 115,805 105,870 60,940 40,1000 40,1106"],
  ["south", "250,960 340,930 430,900 510,850 590,790 650,730 720,600 780,480 830,370"],
  ["south", "140,1090 240,1040 380,1000"],
  ["south", "340,1106 400,1050 420,1015 390,1020 330,1050"],
  ["south", "370,1106 440,1040 500,960 560,900 640,850 650,810"],
  ["south", "410,1106 470,1060 560,1020 590,980 640,930 700,910 715,830 740,740 790,690 820,670 820,640 875,620 830,590 820,530 850,430 880,350"],
  ["south", "430,1106 510,1050 580,1030 640,985 690,980 750,985 755,900 780,790 830,750 920,750 925,730 890,690 885,665 960,640 1020,600 1055,575 980,588 890,580 855,540 860,460 890,360 950,270"],
  ["south", "1115,240 1040,290 970,370 930,420 920,470 935,510 1010,517 1080,490 1130,450 1200,440 1330,445 1400,478 1330,480 1260,490 1200,530 1160,570 1155,640 1130,700 1080,720 1080,770 1150,820 1170,870 1100,860 1040,830 1085,838 1040,770 1020,720 1030,680 1100,660 1115,620 1125,560 1180,520"],
  ["south", "1150,240 1080,280 1000,360 960,400 955,450 985,480 1040,470 1110,420 1180,410 1300,408 1400,420 1463,490"],
  ["south", "1180,240 1100,290 1030,340 990,380 990,420 1020,447 1070,440 1130,390 1200,375 1320,370 1400,380 1440,420 1463,460"],
  ["south", "1230,230 1170,265 1100,300 1030,350 1015,390 1040,417 1080,400 1120,360 1200,340 1330,330 1415,325 1440,370 1463,420"],
  ["south", "1463,545 1390,510 1280,515 1220,560 1195,610 1210,680 1220,720 1180,780 1200,840 1245,900 1200,925 1100,920 1010,900 920,905 890,930 890,1010 860,1070 840,1106"],
  ["south", "1463,580 1390,540 1300,545 1240,590 1235,660 1250,720 1230,780 1250,840 1310,900 1290,940 1210,975 1100,950 1020,955 960,975 930,1030 900,1106"],
  ["south", "1463,700 1440,650 1380,628 1330,650 1320,700 1330,790 1380,850 1390,920 1350,990 1270,1060 1240,1106"],
  ["south", "1370,760 1370,710 1395,685 1430,700 1443,760 1440,820 1400,820 1370,760"],
  ["south", "1463,920 1430,980 1400,1040 1430,1106"],
  ["south", "850,1106 850,900 870,860 930,850 1080,850"],
  ["south", "940,1106 970,1040 1030,1000"],
  ["south", "600,1106 650,1080 720,1085 760,1106"],
  ["east", "200,160 175,130 175,90 220,68 300,50 360,0"],
  ["east", "200,160 240,135 290,130 370,110 410,60 480,70 530,20 560,0"],
  ["east", "20,0 15,60 32,150 0,190"],
  ["east", "60,0 50,80 75,160 30,220 0,245"],
  ["east", "120,0 92,60 115,150 60,235 55,265 90,262 130,245 180,210 250,200 300,150 350,170 400,150 430,100 490,110 550,60 610,30 650,0"],
  ["east", "0,335 90,320 150,270 220,260 280,210 330,200 380,215 430,180 450,130 530,130 590,70 670,30 700,0"],
  ["east", "0,372 90,360 140,300 230,290 300,240 345,210 390,235 430,210 450,150"],
  ["east", "0,440 100,435 150,375 240,355 320,290 370,290 440,275 480,205 560,195 600,140 680,90 720,60 830,40 900,0"],
  ["east", "0,470 110,460 160,405 260,375 340,320 420,300 470,260 530,210 580,200 640,185 600,230 540,290 490,330"],
  ["east", "0,500 120,485 200,430 300,380 400,355 480,330"],
  ["east", "0,530 130,510 240,440 340,380"],
  ["east", "0,560 120,530 250,470"],
  ["east", "905,58 860,80 780,90 730,120"],
  ["east", "0,735 90,680 160,600 230,575 330,570 470,590 595,605 590,570 540,530 460,480 480,430 560,380 600,340 620,270"],
  ["east", "0,700 80,640 150,560 230,530 340,540 440,560 505,550 480,520 420,500 415,450 480,390 560,330"],
  ["east", "0,780 60,740 120,690 190,620 260,585"],
  ["east", "60,640 160,560 240,510 330,505 410,525 380,480 380,440 440,400"],
  ["east", "330,470 270,475 200,510 120,575"],
  ["east", "740,190 730,220 755,290 730,295 690,270 660,260"],
  ["east", "820,230 860,290 885,350 840,350 780,350 690,335 670,400 640,440 570,455 575,485 640,550 690,640 750,710 720,730 640,700 570,640 500,600"],
  ["east", "820,230 850,190 910,170 980,105 1060,115 1120,170 1130,150 1090,110"],
  ["east", "870,230 890,280 940,365 910,380 820,375 740,400 690,430 660,500 690,560 720,620 790,680 838,705 800,735 700,740 600,730 530,690 440,650 350,645 270,650 245,680 260,703 340,685 380,700 420,800 480,840 560,882"],
  ["east", "870,230 900,190 980,135 1060,150 1110,200 1200,218 1180,170 1150,130"],
  ["east", "915,230 940,300 1000,380 960,400 880,410 800,440 730,480 710,520 740,590 800,640 880,670 910,690 880,730 800,760 680,782 620,760 570,705 500,685 435,690 435,730 490,800 560,850 640,882"],
  ["east", "915,230 940,190 1000,165 1060,190 1110,235 1215,250"],
  ["east", "985,260 990,235 1020,225 1060,260 1110,285 1215,295"],
  ["east", "985,260 1000,310 1050,380 1040,435 960,440 900,475 820,490 775,520 780,560 820,610 900,630 960,660 970,740 1050,750 1080,810 1095,882"],
  ["east", "590,815 680,820 740,800 800,760 880,720"],
  ["east", "590,815 600,850 660,882"],
  ["east", "800,882 860,815 930,802 1010,820 980,850 930,882"],
  ["east", "840,882 880,850 910,847 890,882"],
  ["east", "0,850 60,825 200,812 330,800 360,850 390,890"],
  ["east", "0,885 80,855 200,850 320,858 350,895"],
  ["east", "1215,545 1160,560 1145,590 1170,640"],
  ["east", "1215,30 1205,60 1215,100"],
  ["east", "1000,0 990,40 930,60 860,110"],
];

const shade: [Sheet, string][] = [
  ["north", "270,100 230,300 140,440 24,560"],
  ["north", "600,190 540,330 400,380 300,620"],
  ["north", "900,180 820,330 760,420 700,620"],
  ["north", "1010,170 900,400 850,540"],
  ["north", "740,700 650,860 480,1000 390,1060"],
  ["north", "1330,600 1180,700 1080,860 900,980 740,1130"],
  ["north", "180,880 100,1050 60,1200"],
  ["south", "560,60 330,250 180,480 34,640"],
  ["south", "1150,20 900,180 780,340 640,600 420,790 250,900"],
  ["south", "230,660 120,800 40,900"],
  ["south", "1400,380 1200,400 1080,470"],
  ["east", "700,10 480,140 340,270 120,420 0,480"],
  ["east", "280,760 380,790 420,870"],
];

const toCurves = (list: [Sheet, string][], only?: Sheet) =>
  list.filter(([sheet]) => !only || sheet === only).map(([sheet, pts]) => curve(sheet, pts)).join("");

const sheetOutlines: [Sheet, string][] = [
  ["north", "M0 0H822V221H417V405H0Z"],
  ["east", "M417 221H822V515H548V430H417Z"],
  ["south", "M0 405H417V430H548V750H0Z"],
];

function TerrainMap() {
  return (
    <svg viewBox="0 0 822 750" preserveAspectRatio="xMinYMin slice" className="absolute inset-0 size-full" fill="none">
      <defs>
        <filter id="soft" x="-10%" y="-10%" width="120%" height="120%">
          <feGaussianBlur stdDeviation="15" />
        </filter>
        {sheetOutlines.map(([sheet, d]) => (
          <clipPath key={sheet} id={"sheet-" + sheet}>
            <path d={d} />
          </clipPath>
        ))}
        <path id="beacon" d="M802 417C806 445 816 475 818 560" />
      </defs>
      <rect width="830" height="760" fill="#f6f6f6" />
      <path d={toCurves(shade)} stroke="#e9e9e7" strokeWidth="46" filter="url(#soft)" />
      {sheetOutlines.map(([sheet]) => (
        <g key={sheet} clipPath={"url(#sheet-" + sheet + ")"}>
          <path d={toCurves(minorContours, sheet)} stroke="#dedede" strokeWidth="1.200" />
          <path d={toCurves(majorContours, sheet)} stroke="#cbcbcb" strokeWidth="1.500" />
        </g>
      ))}
      <g stroke="#7d5083" strokeWidth="3" strokeLinejoin="round">
        <path d="M782 0 793 32 798 50 803 95 810 122 802 138 775 200 764 207 648 270 578 344 533 360 453 413 382 444 319 493 295 559 237 640 180 688 108 730 80 750" />
        <path d="M822 383 807 393 789 401 M789 420 802 452 810 508 809 560" />
      </g>
      <g fill="#a377aa" fontSize="14" fontFamily="'Noto Sans', sans-serif">
        <text transform="translate(617 330) rotate(-43)">Parke Creek Rd</text>
        <text transform="translate(391 458) rotate(-26)">Parke Creek Rd</text>
        <text transform="translate(238 663) rotate(-52)">Parke Creek Rd</text>
        <text transform="translate(811 64) rotate(86)">Parke Cre</text>
        <text transform="translate(815 128) rotate(102)">ek Rd</text>
        <text>
          <textPath href="#beacon">Beacon Ridge Rd</textPath>
        </text>
      </g>
      <g fill="#aaa9a2" stroke="#f2f2f0" strokeWidth="3" paintOrder="stroke" fontSize="14" fontFamily="'Noto Sans', sans-serif">
        <text transform="translate(151 256) rotate(-50)">3200</text>
        <text transform="translate(484 14) rotate(-10)">3600</text>
        <text x="546" y="431">3200</text>
        <text transform="translate(304 668) rotate(-35)">2800</text>
        <text transform="translate(446 728) rotate(-18)">3200</text>
      </g>
      <circle cx="784" cy="410" r="11.500" fill="#56aee2" />
      <text x="784" y="415" fontSize="15" fontWeight="700" textAnchor="middle" fill="#fff" fontFamily="'Noto Sans', sans-serif">P</text>
    </svg>
  );
}

function Caret() {
  return (
    <svg viewBox="0 0 12 7" className="h-[7px] w-3">
      <path d="M0 0h12L6 7Z" fill="#8a8a8a" />
    </svg>
  );
}

function MapPanel() {
  return (
    <div className="relative mt-[18px] h-[750px] overflow-hidden border border-[#dedede]">
      <TerrainMap />
      <div className="relative flex h-[54px] items-center border-b border-[#d5d5d5] bg-white/65 pr-[10px] pb-[4px] pl-[12px] text-[20px] text-[#8a8a8a]">
        <button className="flex items-center gap-[5px]">Layers <Caret /></button>
        <button className="ml-[30px] flex items-center gap-[5px]">Basemap <Caret /></button>
        <button className="ml-[31px] flex items-center gap-[5px]">Style <Caret /></button>
        <button aria-label="Activity" className="ml-[35px] flex items-center gap-[10px] text-[#7d9f72]">
          <ActivityIcon kind="bike" className="h-[30px] w-[29px]" /> <Caret />
        </button>
        <button aria-label="Map type" className="ml-[32px] flex items-center gap-[5px]">
          <FaMap className="size-[21px]" /> <Caret />
        </button>
        <button aria-label="Full screen" className="ml-auto">
          <svg viewBox="0 0 28 28" className="size-7" fill="#858585">
            <path d="M0 0h10L7 3.500l5 5L8.500 12l-5-5L0 10Z" />
            <path d="M28 0v10l-3.500-3-5 5L16 8.500l5-5L18 0Z" />
            <path d="M0 28V18l3.500 3 5-5 3.500 3.500-5 5 3 3.500Z" />
            <path d="M28 28H18l3-3.500-5-5 3.500-3.500 5 5 3.500-3Z" />
          </svg>
        </button>
      </div>
      <button aria-label="Locate" className="absolute top-[68px] right-[15px] flex h-[46px] w-[43px] items-center justify-center rounded-md bg-white pb-1 text-[#5a5a5a] shadow-[0_1px_5px_rgba(0,0,0,0.35)]">
        <FaMapMarkerAlt className="h-6 w-[17px]" />
      </button>
      <div className="absolute top-[134px] right-[14px] flex w-[44px] flex-col rounded-md bg-white shadow-[0_0_0_3px_rgba(0,0,0,0.1)]">
        <button aria-label="Zoom in" className="flex h-[44px] items-center justify-center">
          <Plus className="size-6 text-[#333]" strokeWidth={4} />
        </button>
        <button aria-label="Zoom out" className="flex h-[43px] items-center justify-center border-y border-[#dadada]">
          <Minus className="size-6 text-[#333]" strokeWidth={4} />
        </button>
        <button aria-label="Reset north" className="flex h-[44px] items-center justify-center">
          <svg viewBox="0 0 12 28" className="h-7 w-3">
            <path d="M6 0 12 13H0Z" fill="#333" />
            <path d="M6 28 0 15.500h12Z" fill="#ccc" />
          </svg>
        </button>
      </div>
      <button className="absolute top-[560px] left-0 flex h-[79px] w-[28px] items-center justify-center rounded-r-md bg-white text-[16px] text-[#777] shadow-[0_0_0_3px_rgba(0,0,0,0.1)] [writing-mode:vertical-rl]">
        LEGEND
      </button>
      <div className="absolute top-[701px] left-[14px] h-[33px] w-[148px] border-[3px] border-t-0 border-[#333] bg-white/70 pl-[8px] text-[15px] leading-[29px] text-[#333]">3000 ft</div>
    </div>
  );
}

const ridelogs: [string, string][] = [
  ["Past Week", "0 rides"],
  ["6 Months", "0 rides"],
  ["All", "5 rides"],
];

const chip = "h-[43px] rounded-[5px] border border-[#bdbdbd] bg-[#e2e2e2] text-[20px] text-[#333] [text-shadow:1px_1px_0_#fff]";

function RightColumn() {
  return (
    <div className="min-w-0">
      <div className="flex h-[99px]">
        <div className="flex items-start pt-[17px] text-[20px] leading-[40px] font-bold text-black">
          Status:
          <span className="mt-[2px] ml-[4px] flex size-[27px] items-center justify-center rounded-full bg-[#2c5f1c] text-white shadow-[0_1px_3px_rgba(0,0,0,0.5)]">
            <Check className="size-[17px]" strokeWidth={3} />
          </span>
        </div>
        <div className="ml-[114px] pt-[20px]">
          <div className="flex gap-[3px]">
            {[1, 2, 3, 4, 5].map((n) => (
              <button key={n} aria-label={"Rate " + n}>
                <svg viewBox="0 0 24 24" className="size-6" fill="#fff" stroke="#bbb" strokeWidth="1.300">
                  <path d="m12 1 2.700 8h8.300l-6.700 5 2.600 8.200L12 17.200l-6.900 5L7.700 14 1 9h8.300Z" />
                </svg>
              </button>
            ))}
          </div>
          <div className="mt-[6px] text-[16px] leading-6 text-[#555]">no votes yet</div>
        </div>
        <div className="ml-auto flex pt-[30px]">
          <button className={chip + " w-[113px]"}>completed</button>
          <div className="ml-[29px]">
            <button className={chip + " w-[98px]"}>check-in</button>
            <a href="#checkins" className="mt-[3px] block text-[16px] leading-6 text-[#ccc] underline">view (5)</a>
          </div>
          <button className={chip + " mr-[14px] ml-[44px] flex w-[98px] items-center justify-center gap-[10px]"}>
            <svg viewBox="0 0 14 22" className="mb-1 h-[21px] w-[14px]">
              <rect x="0" y="0" width="14" height="22" rx="3" fill="#3a2f3a" />
              <rect x="2" y="3" width="10" height="13" fill="#e6e0e6" />
              <circle cx="7" cy="19" r="1.400" fill="#fff" />
            </svg>
            save
          </button>
        </div>
      </div>
      <MapPanel />
      <p className="mt-[29px] text-[19px] leading-[30px] whitespace-nowrap text-[#ccc]">Directions to parke-creek-rd trailhead (47.016010, -120.325920)</p>
      <h2 className="mt-[27px] text-[35px] leading-[44px] font-bold text-[#3f6b31]">Parke Creek Rd Trail Reports</h2>
      <p className="mt-[21px] text-[19px] leading-[30px] whitespace-nowrap text-[#c6c6c6] italic">
        no reports have been added for Parke Creek Rd yet, <a href="#report" className="underline">add a trail report</a>.
        <br />
        Trail reports are used to indicate a trails current condition and inform
        <br />
        about any issues on a trail.
      </p>
      <h2 className="mt-[46px] text-[35px] leading-[44px] font-bold text-[#2a6516]">Recent Ridelog Activity on Trail</h2>
      <div className="mt-[22px] grid grid-cols-3 gap-[31px]">
        {ridelogs.map(([title, rides]) => (
          <div key={title} className="h-[120px] rounded-md border border-[#d9d9d9] bg-[#f3f3f3] px-3 pt-[11px] text-[20px] leading-[30px] font-bold">
            <div className="text-[#2a6516]">{title}</div>
            <div className="mt-[2px] pl-[3px] text-[20px] text-black">{rides}</div>
          </div>
        ))}
      </div>
    </div>
  );
}

function CookieNotice() {
  return (
    <section className="absolute right-[44px] bottom-[21px] h-[623px] w-[504px] bg-[#ededed] px-9 pt-[34px] text-[21px] leading-[35px] text-black">
      <p>
        By continuing to use our website, you agree to our UPDATED{" "}
        <a href="#terms" className="mx-[4px] underline decoration-2 underline-offset-4">Terms of Use</a> and
      </p>
      <p className="mt-[4px]">
        <a href="#privacy" className="ml-[4px] text-[#222] underline decoration-2 underline-offset-4">Privacy Policy.</a>
      </p>
      <p className="mt-[36px] leading-[31px]">
        Outside uses cookies and similar technologies to help our site function, as well as the placement of cookies and similar technologies on behalf of Outside and our third-party partners for tailored advertising and marketing. By clicking “ACCEPT” you consent to placement of such cookies. Want to know more or manage your preferences? Click "Manage Cookie Preferences" in the footer of any Outside website.
      </p>
      <button className="mt-[34px] h-[50px] rounded-[2px] bg-black px-[25px] text-[18px] leading-[50px] text-white">ACCEPT</button>
    </section>
  );
}

function Page() {
  return (
    <main className="relative ml-[6px] flex min-w-0 flex-1 overflow-hidden rounded-t-2xl rounded-br-2xl bg-white font-['Liberation_Sans',Arial,sans-serif] shadow-[0_0_4px_rgba(130,90,90,0.4)]">
      <div className="h-0 min-w-0 flex-1">
        <div className="mx-auto max-w-[1710px] pt-[21px]">
          <PageTabs />
          <div className="grid grid-cols-2 gap-x-[65px]">
            <div className="min-w-0">
              <Summary />
              <ElevationChart />
              <Details />
            </div>
            <RightColumn />
          </div>
        </div>
      </div>
      <div className="flex w-[22px] shrink-0 flex-col items-center bg-[#fdfdfd] pt-[12px] pr-1 pb-[10px]">
        <svg viewBox="0 0 14 10" className="h-[10px] w-[14px]">
          <path d="M7 0 14 10H0Z" fill="#8c8c8c" />
        </svg>
        <div className="mt-[125px] h-[458px] w-[13px] rounded-full bg-[#8c8c8c]" />
        <svg viewBox="0 0 14 11" className="mt-auto h-[11px] w-[14px]">
          <path d="M7 11 0 0h14Z" fill="#8c8c8c" />
        </svg>
      </div>
      <CookieNotice />
    </main>
  );
}

/* ---------- taskbar ---------- */

function Briefcase() {
  return (
    <svg viewBox="0 0 34 28" className="h-7 w-[34px]">
      <path d="M12 5V3a2 2 0 0 1 2-2h6a2 2 0 0 1 2 2v2" fill="none" stroke="#333" strokeWidth="2.500" />
      <rect y="4" width="34" height="23" rx="2" fill="#a85f06" />
      <path d="M0 6a2 2 0 0 1 2-2h30a2 2 0 0 1 2 2v10H0Z" fill="#ee9208" />
      <rect x="14.500" y="13" width="5" height="6" fill="#f7dc2f" />
    </svg>
  );
}

function TaskButton({ label, dot = false, children }: { label: string; dot?: boolean; children: ReactNode }) {
  return (
    <button aria-label={label} className="relative flex h-[54px] w-[66px] items-center justify-center">
      {children}
      {dot && <span className="absolute bottom-[-2px] size-[6px] rounded-full bg-[#857a7e] px-1" />}
    </button>
  );
}

function Taskbar() {
  return (
    <footer className="relative flex h-[72px] items-center justify-center border-t-2 border-[#b6b0b8] bg-[linear-gradient(to_right,#cfe1ec_0%,#cde0ec_27%,#bde5e0_32%,#d6e8c4_36%,#ede6ac_39%,#f5e0c4_44%,#f1dacb_52%,#f4d6d6_61%,#eccfe8_72%,#e9def0_79%,#e3ebf5_86%,#e3ebf5_100%)]">
      <div className="flex items-center pb-[2px]">
        <TaskButton label="Start">
          <svg viewBox="0 0 35 35" className="size-[35px]">
            <defs>
              <linearGradient id="win" x1="0" y1="0" x2="1" y2="1">
                <stop offset="0" stopColor="#4fd0f9" />
                <stop offset="1" stopColor="#0673d4" />
              </linearGradient>
            </defs>
            <path d="M1 0h16v17H0V1a1 1 0 0 1 1-1ZM18 0h16a1 1 0 0 1 1 1v16H18ZM0 18h17v17H1a1 1 0 0 1-1-1ZM18 18h17v16a1 1 0 0 1-1 1H18Z" fill="url(#win)" />
          </svg>
        </TaskButton>
        <label className="mr-[4px] ml-[6px] flex h-[46px] w-[327px] items-center rounded-full border border-b-2 border-[#d4cdbb] bg-[linear-gradient(to_right,#eff8ef,#fcfbee_35%,#fdf8ee)] pr-[2px] pl-[15px]">
          <Search className="size-[23px] -scale-x-100 text-[#222]" strokeWidth={2.400} />
          <input aria-label="Search" placeholder="Search" className="ml-[15px] min-w-0 flex-1 bg-transparent text-[19px] outline-none placeholder:text-[#5b5750]" />
          <span className="flex h-[40px] w-[78px] items-center justify-center rounded-full bg-[#ebe5df]">
            <Briefcase />
          </span>
        </label>
        <TaskButton label="Task view">
          <svg viewBox="0 0 36 34" className="h-[34px] w-9">
            <rect x="0" y="9" width="27" height="25" rx="1.500" fill="#2c2c2c" />
            <rect x="9" y="0" width="27" height="24" rx="1.500" fill="#f2f2f2" opacity=".9" />
            <path d="M9 9h18v15H9Z" fill="#c4c4c4" />
          </svg>
        </TaskButton>
        <TaskButton label="Copilot">
          <Copilot className="h-[33px] w-[35px]" warm />
        </TaskButton>
        <TaskButton label="Edge">
          <span className="flex size-[56px] shrink-0 items-center justify-center rounded-md border border-[#dfd0ce] bg-[#f7eae8]">
            <svg viewBox="0 0 36 36" className="mb-1 size-[37px]">
              <defs>
                <linearGradient id="edge" x1="0" y1="0" x2="1" y2="0.500">
                  <stop offset="0" stopColor="#1f8fd8" />
                  <stop offset=".5" stopColor="#2fc0dc" />
                  <stop offset="1" stopColor="#5fe05a" />
                </linearGradient>
              </defs>
              <path d="M1 16C2 6 9 0 18 0c11 0 18 8 18 15 0 6-4 9-9 9-4 0-6-2-5-4 3-4 0-9-6-9C9 11 4 15 3 22 1 20 1 18 1 16Z" fill="url(#edge)" />
              <path d="M14 14c-4 4-4 12 2 16 6 3 12 2 16-2-3 6-9 8-14 8C9 36 1 29 1 18c3-6 9-7 13-4Z" fill="#1660b0" />
            </svg>
          </span>
          <span className="absolute bottom-[7px] left-[14px]">
            <Avatar className="size-[18px]" />
          </span>
          <span className="absolute bottom-[-2px] h-[5px] w-[24px] rounded-full bg-[#0b74d1]" />
        </TaskButton>
        <TaskButton label="Microsoft Store, 1 update">
          <svg viewBox="0 0 36 36" className="size-[36px]">
            <path d="M10 9V4a2 2 0 0 1 2-2h12a2 2 0 0 1 2 2v5" fill="none" stroke="#41b8f0" strokeWidth="2.500" />
            <path d="M1 7h34v24a4 4 0 0 1-4 4H5a4 4 0 0 1-4-4Z" fill="#15518f" />
            <path d="M10 13h7.500v7H10Z" fill="#f25022" />
            <path d="M18.500 13H26v7h-7.500Z" fill="#7fba00" />
            <path d="M10 21h7.500v7H10Z" fill="#00a4ef" />
            <path d="M18.500 21H26v7h-7.500Z" fill="#ffb900" />
          </svg>
          <span className="absolute top-[1px] right-[6px] flex size-[23px] items-center justify-center rounded-full bg-[#0b74d1] text-[15px] text-white">1</span>
        </TaskButton>
        <TaskButton label="Microsoft 365">
          <Hexagon365 className="size-[34px]" />
        </TaskButton>
        <TaskButton label="File Explorer" dot>
          <svg viewBox="0 0 36 34" className="h-[34px] w-9">
            <path d="M0 3a2 2 0 0 1 2-2h10l3 4H0Z" fill="#d99c0a" />
            <path d="M0 6h12l3-3h19a2 2 0 0 1 2 2v26a2 2 0 0 1-2 2H2a2 2 0 0 1-2-2Z" fill="#fbca3b" />
            <path d="M6 33v-7a3 3 0 0 1 3-3h18a3 3 0 0 1 3 3v7Z" fill="#1074cc" />
            <path d="M11 28h14" stroke="#0b4c91" strokeWidth="2" />
          </svg>
        </TaskButton>
        <TaskButton label="Terminal" dot>
          <svg viewBox="0 0 36 30" className="h-[29px] w-9">
            <rect width="36" height="30" rx="2" fill="#3a3a3a" />
            <path d="M2 0h10v6H0V2a2 2 0 0 1 2-2Z" fill="#ddd" />
            <path d="M12 0h12v6H12Z" fill="#aaa" />
            <path d="M24 0h10a2 2 0 0 1 2 2v4H24Z" fill="#777" />
            <path d="m5 10 7 7-7 7" fill="none" stroke="#ddd" strokeWidth="3" />
            <path d="M17 23h12" stroke="#fff" strokeWidth="3.500" />
          </svg>
        </TaskButton>
        <TaskButton label="Visual Studio Code" dot>
          <svg viewBox="0 0 36 36" className="size-[36px]">
            <path d="m26 0 8 3.500A3 3 0 0 1 36 6v24a3 3 0 0 1-2 2.500L26 36Z" fill="#2ba3ee" />
            <path d="M26 0v10L5 26l-4-3a1.500 1.500 0 0 1 0-2Z" fill="#0b6fb8" />
            <path d="M26 36V26L5 10l-4 3a1.500 1.500 0 0 0 0 2Z" fill="#1a86d0" />
          </svg>
        </TaskButton>
      </div>
      <div className="absolute right-[31px] flex items-center pb-[2px] text-[#1b1b1b]">
        <ChevronUp className="size-[22px]" strokeWidth={1.800} />
        <svg viewBox="0 0 26 24" className="ml-[24px] h-6 w-[26px]">
          <path d="M6 18a5.500 5.500 0 0 1 0-11 8 8 0 0 1 15 1 5 5 0 0 1 3 9l-3 1Z" fill="#aeb2b8" stroke="#333" strokeWidth="1.500" />
          <circle cx="18.500" cy="17" r="6" fill="#fff" stroke="#2579c4" strokeWidth="1.800" />
          <path d="M16 16a3 3 0 0 1 5-1m0 3a3 3 0 0 1-5 1" stroke="#2579c4" strokeWidth="1.400" fill="none" />
        </svg>
        <svg viewBox="0 0 26 26" className="ml-[23px] size-[25px]" fill="none" stroke="#222" strokeWidth="1.600">
          <path d="M2 12A10.500 10.500 0 0 1 21 7M21 1v6h-6M2 23v-6h6M2 17a11 11 0 0 0 8 7" />
          <circle cx="19" cy="19" r="6" fill="#f7941d" stroke="none" />
        </svg>
        <Wifi className="ml-[23px] size-[23px]" strokeWidth={1.900} />
        <Volume2 className="ml-[12px] size-[23px]" strokeWidth={1.500} />
        <svg viewBox="0 0 26 16" className="ml-[14px] h-4 w-[25px]" fill="none" stroke="#222" strokeWidth="1.700">
          <rect x="1" y="1" width="21" height="14" rx="4" />
          <path d="M24.500 5.500v5" strokeWidth="2" />
          <path d="M5.500 4.500v7" strokeWidth="3" />
        </svg>
        <div className="ml-[25px] text-right text-[17px] leading-6">
          <div>12:47 AM</div>
          <div>8/16/2024</div>
        </div>
        <Bell className="ml-[13px] size-[22px] fill-[#0a4a9a] text-[#0a4a9a]" strokeWidth={1.800} />
      </div>
    </footer>
  );
}

export default function App() {
  return (
    <div className="flex h-screen flex-col overflow-hidden bg-[#eee1e0] font-['Open_Sans','Noto_Sans',sans-serif] text-black">
      <TabStrip />
      <AddressRow />
      <div className="flex min-h-0 flex-1 pb-[6px]">
        <Page />
        <Sidebar />
      </div>
      <Taskbar />
    </div>
  );
}
